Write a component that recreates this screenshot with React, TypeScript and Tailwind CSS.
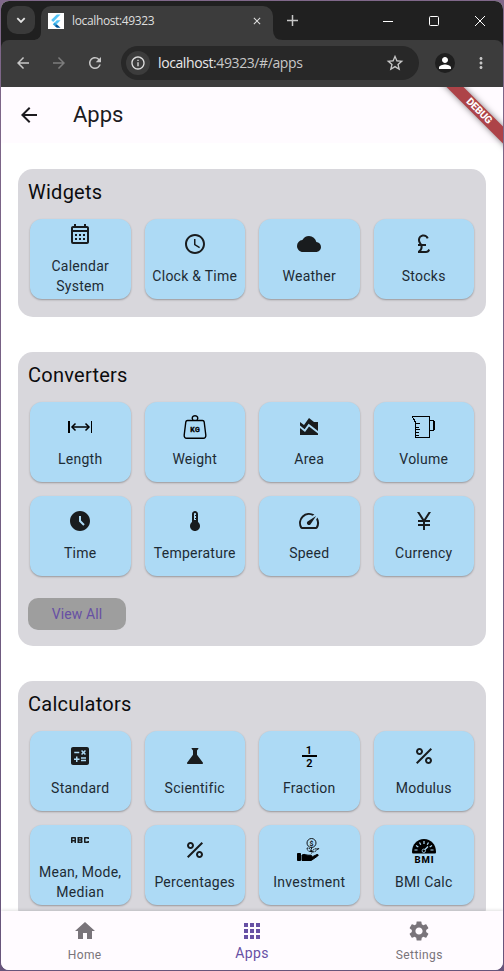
import type { ReactNode } from "react";
import {
  MdAbc,
  MdAccessTime,
  MdAccessTimeFilled,
  MdApps,
  MdAreaChart,
  MdArrowBack,
  MdArrowForward,
  MdCalculate,
  MdClose,
  MdCloud,
  MdCurrencyPound,
  MdCurrencyYen,
  MdHome,
  MdInfoOutline,
  MdMoreVert,
  MdOutlineCalendarMonth,
  MdPercent,
  MdPerson,
  MdRefresh,
  MdScience,
  MdSettings,
  MdSpeed,
  MdStarOutline,
  MdThermostat,
} from "react-icons/md";

type Tool = { label: string; icon: ReactNode };

function LengthIcon() {
  return (
    <svg className="shrink-0" width="24" height="24" viewBox="0 0 24 24" fill="none" stroke="black">
      <path d="M1 6v12" strokeWidth="2" shapeRendering="crispEdges" />
      <path d="M23.500 6v12" shapeRendering="crispEdges" />
      <path d="M4 12h17" strokeWidth="1.500" />
      <path d="M7.500 8.500L4 12l3.500 3.500M17.500 8.500L21 12l-3.500 3.500" strokeWidth="1.500" />
    </svg>
  );
}

function WeightIcon() {
  return (
    <svg className="shrink-0" width="24" height="24" viewBox="0 0 24 24" fill="none" stroke="black" strokeWidth="1.4">
      <path d="M10 5.200C8.300 3 9.500.8 12 .8s3.700 2.200 2 4.400" />
      <path d="M4.500 5.500h15c1 0 1.500.5 1.700 1.500l1.600 13c.2 2-.7 3.300-2.500 3.300H3.700c-1.800 0-2.700-1.300-2.500-3.300L2.800 7c.2-1 .7-1.500 1.700-1.500z" />
      <text x="12.300" y="17.300" textAnchor="middle" fill="black" stroke="black" strokeWidth="0.3" fontFamily="Roboto, sans-serif" fontWeight="700" fontSize="7" letterSpacing="0.5">KG</text>
    </svg>
  );
}

function JugIcon() {
  return (
    <svg className="shrink-0" width="24" height="24" viewBox="0 0 24 24" fill="none" stroke="black" shapeRendering="crispEdges">
      <path d="M0 1.500h18M17.500 1v22M3 22.500h15M3.500 6v17M0.500 1v2M1.500 3v2M2.500 4v3" />
      <path d="M4 8.500h4M4 12.500h3M4 14.500h4M4 17.500h3M4 20.500h3" />
      <path d="M18 5.500h4M18 15.500h4" />
      <path d="M22 6v9" strokeWidth="2" />
    </svg>
  );
}

function FractionIcon() {
  return (
    <svg className="shrink-0" width="24" height="24" viewBox="0 0 24 24" fill="black" fontFamily="Roboto, sans-serif" fontWeight="600" fontSize="11" textAnchor="middle">
      <text x="12" y="10">1</text>
      <path d="M5 11h15v2H5z" shapeRendering="crispEdges" />
      <text x="12.300" y="22.500">2</text>
    </svg>
  );
}

function InvestmentIcon() {
  return (
    <svg className="shrink-0" width="24" height="24" viewBox="0 0 24 24" fill="none" stroke="black">
      <circle cx="14.500" cy="5" r="4.500" strokeWidth="0.900" />
      <text x="14.500" y="7.500" textAnchor="middle" fill="black" stroke="none" fontFamily="Roboto, sans-serif" fontWeight="600" fontSize="7">$</text>
      <path d="M14.500 9.500v6M14 13.500c-3 0-4-1.500-4-3.500 2.500 0 3.800 1 4 3.500zM15 14c3.500 0 5-1.500 5.500-3.500-3 .2-5 1.200-5.500 3.500z" strokeWidth="0.900" strokeDasharray="2 0.600" />
      <path d="M20.500 12l1.500-2" strokeWidth="0.900" />
      <path d="M0.500 15.500h3v7h-3zM5 17c3-1.500 4.500.2 6 .2h3c1 0 1 1.400-.5 1.500H10.500h5l4.500-2.200c1.500-.2 1.500.8.7 1.500l-6.500 4.500H5z" fill="black" />
    </svg>
  );
}

function BmiIcon() {
  return (
    <svg className="shrink-0" width="24" height="25" viewBox="0 0 24 25" fill="black">
      <path d="M0 14C0 6.500 5 1 12 1s12 5.500 12 13c0 1-.5 1.500-1.500 1.500h-21C.5 15.500 0 15 0 14z" />
      <path d="M2.500 12h3M4 7.500l2.300 1.500M7.500 4.500l1.300 2.300M12 3v3M16.500 4.500l-1.300 2.300M21.500 12h-3M20 7.500L17.700 9M12 12.500l4-4" stroke="#addaf5" strokeWidth="1.200" />
      <circle cx="11.800" cy="12.800" r="1.700" stroke="#addaf5" strokeWidth="0.800" />
      <text x="12.500" y="24.500" textAnchor="middle" fontFamily="Roboto, sans-serif" fontSize="9.500" fontWeight="800" letterSpacing="1">BMI</text>
    </svg>
  );
}

const widgets: Tool[] = [
  { label: "Calendar System", icon: <MdOutlineCalendarMonth /> },
  { label: "Clock & Time", icon: <MdAccessTime /> },
  { label: "Weather", icon: <MdCloud /> },
  { label: "Stocks", icon: <MdCurrencyPound /> },
];

const converters: Tool[] = [
  { label: "Length", icon: <LengthIcon /> },
  { label: "Weight", icon: <WeightIcon /> },
  { label: "Area", icon: <MdAreaChart /> },
  { label: "Volume", icon: <JugIcon /> },
  { label: "Time", icon: <MdAccessTimeFilled /> },
  { label: "Temperature", icon: <MdThermostat /> },
  { label: "Speed", icon: <MdSpeed /> },
  { label: "Currency", icon: <MdCurrencyYen /> },
];

const calculators: Tool[] = [
  { label: "Standard", icon: <MdCalculate /> },
  { label: "Scientific", icon: <MdScience /> },
  { label: "Fraction", icon: <FractionIcon /> },
  { label: "Modulus", icon: <MdPercent /> },
  { label: "Mean, Mode, Median", icon: <MdAbc /> },
  { label: "Percentages", icon: <MdPercent /> },
  { label: "Investment", icon: <InvestmentIcon /> },
  { label: "BMI Calc", icon: <BmiIcon /> },
];

function ToolTile({ label, icon }: Tool) {
  return (
    <button className="flex h-20 flex-col items-center justify-center gap-2.5 rounded-xl bg-[#addaf5] px-1 text-[#191c1e] shadow-[0_1px_2px_rgba(0,0,0,0.3)]">
      <span className="flex size-6 shrink-0 items-center justify-center text-2xl">{icon}</span>
      <span className="text-center text-sm leading-5 tracking-[0.25px] text-[#1d2b34]">{label}</span>
    </button>
  );
}

function Section({ title, tools, children }: { title: string; tools: Tool[]; children?: ReactNode }) {
  return (
    <section className="shrink-0 rounded-[15px] bg-[#d8d7dc] px-2.5 pt-[9px] pb-[18px]">
      <h2 className="text-xl leading-7 tracking-[0.25px] text-[#0c0c0e]">{title}</h2>
      <div className="mt-[13px] mr-0.5 ml-0.5 grid grid-cols-4 gap-x-3.5 gap-y-3.5">
        {tools.map((tool) => (
          <ToolTile key={tool.label} {...tool} />
        ))}
      </div>
      {children}
    </section>
  );
}

function FlutterLogo() {
  return (
    <svg width="16" height="16" viewBox="0 0 16 16">
      <path fill="white" d="M0 0h16v16H0z" />
      <path fill="#54c5f8" d="M8.800 1.500h3.700L5.200 9l-2-1.900z" />
      <path fill="#54c5f8" d="M8.800 7.300h3.700L8.700 11.200 6.800 9.300z" />
      <path fill="#29a3e0" d="M4.800 11.200l2-1.900 1.900 1.900-2 1.900z" />
      <path fill="#01579b" d="M6.700 13.100l2-1.900 3.800 3.500H8.800z" />
    </svg>
  );
}

function BrowserChrome() {
  return (
    <header className="shrink-0 bg-[#202020] font-['Open_Sans','Noto_Sans',sans-serif] text-[#dedede]">
      <div className="flex h-[39px] items-end">
        <div className="mb-[6px] ml-1.5 flex size-7 items-center justify-center rounded-[10px] bg-[#3a3a3a]">
          <svg width="10" height="7" viewBox="0 0 10 7" fill="none" stroke="#e3e3e3" strokeWidth="1.800">
            <path d="M1.300 1.200L5 5l3.700-3.800" />
          </svg>
        </div>
        <svg width="6" height="8" viewBox="0 0 6 8">
          <path fill="#3c3c3c" d="M6 0v8H-2Q6 8 6 0z" />
        </svg>
        <div className="flex h-[34px] w-[232px] items-center rounded-t-[10px] bg-[#3c3c3c] pb-[5px] pl-[7px]">
          <FlutterLogo />
          <span className="ml-2 flex-1 text-xs tracking-[-0.360px]">localhost:49323</span>
          <MdClose className="mr-2.5 size-3" />
        </div>
        <svg width="10" height="10" viewBox="0 0 10 10">
          <path fill="#3c3c3c" d="M0 0v10h10Q0 10 0 0z" />
        </svg>
        <svg className="mb-3.5 ml-1" width="11" height="11" viewBox="0 0 11 11" stroke="#c7c7c7" strokeWidth="1.500">
          <path d="M5.500 0v11M0 5.500h11" />
        </svg>
        <div className="mr-[18px] mb-3.5 ml-auto flex items-center gap-9 text-white">
          <svg width="10" height="10" viewBox="0 0 10 10" stroke="currentColor">
            <path d="M0 5.500h10" />
          </svg>
          <svg width="10" height="10" viewBox="0 0 10 10" fill="none" stroke="currentColor">
            <rect x="0.500" y="0.500" width="9" height="9" rx="1" />
          </svg>
          <svg width="10" height="10" viewBox="0 0 10 10" stroke="currentColor">
            <path d="M0 0l10 10M10 0L0 10" />
          </svg>
        </div>
      </div>
      <div className="flex h-[47px] items-center rounded-t-lg bg-[#3c3c3c] pb-0.5 pl-[13px]">
        <MdArrowBack className="size-[18px] text-[#c7c7c7]" />
        <MdArrowForward className="ml-[18px] size-[18px] text-[#7c7c7c]" />
        <MdRefresh className="ml-[18px] size-[18px] text-[#c7c7c7]" />
        <div className="ml-[17px] flex h-[34px] w-[298px] items-center rounded-full bg-[#282828] pl-[5px]">
          <span className="flex size-6 items-center justify-center rounded-full bg-[#3c3c3c]">
            <MdInfoOutline className="size-4" />
          </span>
          <span className="ml-2 flex-1 text-sm tracking-[-0.400px] text-[#c7c7c7]">
            <span className="text-[#e8e8e8]">localhost</span>:49323/#/apps
          </span>
          <MdStarOutline className="mr-3.5 size-5 text-[#c7c7c7]" />
        </div>
        <span className="ml-[16px] flex size-5 items-center justify-center rounded-full bg-[#1f1f1f]">
          <MdPerson className="size-[18px] text-white" />
        </span>
        <MdMoreVert className="ml-[17px] size-[18px] text-[#c7c7c7]" />
      </div>
    </header>
  );
}

function DebugBanner() {
  return (
    <div className="absolute top-0 right-0 size-[70px] overflow-hidden">
      <div className="absolute top-[18px] -right-[26px] h-3 w-[100px] rotate-45 bg-[#ad4348] text-center font-[Roboto,sans-serif] text-[10.200px] leading-3 font-extrabold tracking-[-0.200px] text-white shadow-[0_0_6px_rgba(0,0,0,0.5)]">
        DEBUG
      </div>
    </div>
  );
}

export default function App() {
  return (
    <div className="h-[971px] w-[504px] bg-linear-to-b from-[#80688a] to-[#67547b] p-px">
      <div className="flex h-[969px] w-[502px] flex-col overflow-hidden rounded-lg bg-white font-[Roboto,sans-serif]">
        <BrowserChrome />
        <div className="relative flex h-14 shrink-0 items-center bg-[#fffbff] pl-4">
          <MdArrowBack className="size-6 text-[#1c1b1f]" />
          <h1 className="ml-8 text-[22px] leading-7 text-[#1c1b1f]">Apps</h1>
          <DebugBanner />
        </div>
        <main className="flex min-h-0 flex-1 flex-col gap-[35px] overflow-hidden pt-[26px] pr-[17px] pl-[17px]">
          <Section title="Widgets" tools={widgets} />
          <Section title="Converters" tools={converters}>
            <button className="mt-[22px] -mb-0.5 block h-8 w-[98px] rounded-[10px] bg-[#9e9e9e] text-sm tracking-[0.100px] text-[#6750a4]">
              View All
            </button>
          </Section>
          <Section title="Calculators" tools={calculators} />
        </main>
        <nav className="z-10 grid h-[59px] shrink-0 grid-cols-3 bg-[#fffbff] pt-2 text-xs leading-4 tracking-[0.400px] text-[#79747a] shadow-[0_-1px_3px_rgba(0,0,0,0.12)]">
          <a className="flex flex-col items-center gap-1">
            <MdHome className="size-6" />
            <span>Home</span>
          </a>
          <a className="flex flex-col items-center text-sm leading-5 text-[#6750a4]">
            <MdApps className="size-6" />
            <span>Apps</span>
          </a>
          <a className="flex flex-col items-center gap-1">
            <MdSettings className="size-6" />
            <span>Settings</span>
          </a>
        </nav>
      </div>
    </div>
  );
}
